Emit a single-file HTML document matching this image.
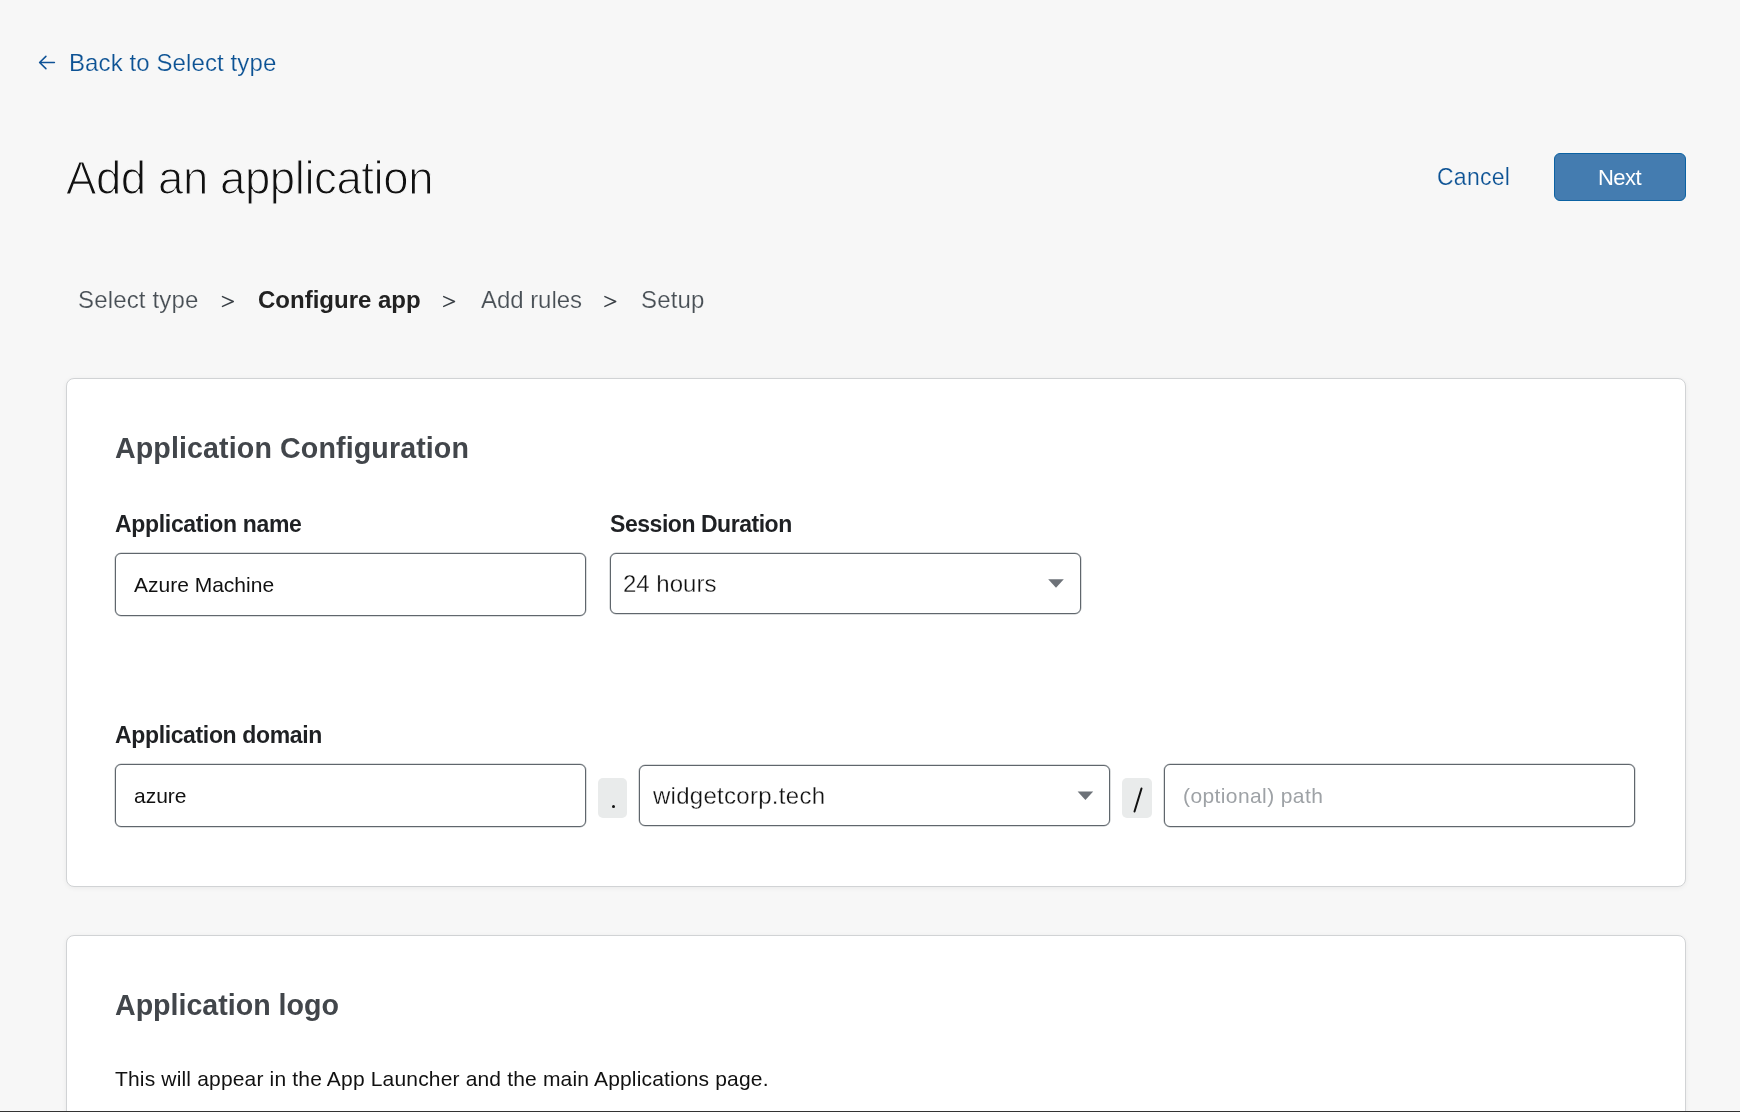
<!DOCTYPE html>
<html>
<head>
<meta charset="utf-8">
<style>
html,body{margin:0;padding:0;}
body{width:1740px;height:1112px;overflow:hidden;background:#f7f7f7;position:relative;font-family:"Liberation Sans",sans-serif;}
.t{position:absolute;white-space:nowrap;line-height:1;will-change:transform;}
.card{position:absolute;background:#fff;border:1px solid #d1d3d5;border-radius:8px;box-sizing:border-box;box-shadow:0 1px 5px rgba(0,0,0,0.06);}
.inp{position:absolute;box-sizing:border-box;background:#fff;border:1px solid #5f666c;border-radius:6px;box-shadow:0 0 0 0.5px rgba(95,102,108,0.45);}
.chip{position:absolute;box-sizing:border-box;background:#e9ebeb;border-radius:5px;}
.arrow{position:absolute;width:0;height:0;border-left:7.5px solid transparent;border-right:7.5px solid transparent;border-top:8px solid #6d7278;}
.link{color:#0c5294;-webkit-text-stroke:0.2px #f7f7f7;}
.crumb{color:#484f55;font-size:24px;letter-spacing:0.15px;-webkit-text-stroke:0.2px #f7f7f7;}
.gt{color:#4f565c;font-size:24px;}
.label{color:#1f2124;font-size:23px;font-weight:700;letter-spacing:-0.42px;}
.head{color:#42464b;font-size:28.6px;font-weight:700;}
</style>
</head>
<body>

<!-- back link -->
<svg style="position:absolute;left:0;top:0" width="80" height="80" viewBox="0 0 80 80">
  <path d="M40.2 62.5 H54.4 M45.9 56.4 L39.6 62.5 L45.9 68.6" fill="none" stroke="#0e5296" stroke-width="1.55" stroke-linecap="round" stroke-linejoin="round"/>
</svg>
<div class="t link" style="left:69px;top:51px;font-size:24px;letter-spacing:0.1px;">Back to Select type</div>

<!-- title -->
<div class="t" style="left:66.4px;top:155.6px;font-size:45.6px;color:#111;letter-spacing:-0.45px;-webkit-text-stroke:1.2px #f7f7f7;">Add an application</div>

<!-- actions -->
<div class="t link" style="left:1437px;top:166px;font-size:23px;letter-spacing:0.25px;">Cancel</div>
<div style="position:absolute;left:1554px;top:153px;width:132px;height:48px;box-sizing:border-box;background:#447cb0;border:1px solid #0b62a3;border-radius:6px;"></div>
<div class="t" style="left:1598px;top:167px;font-size:22px;color:#fff;letter-spacing:-0.55px;">Next</div>

<!-- breadcrumb -->
<div class="t crumb" style="left:78px;top:288px;">Select type</div>
<svg style="position:absolute;left:215px;top:288px" width="26" height="26" viewBox="215 288 26 26"><path d="M222.5 296.6 L233.3 301.5 L222.5 306.4" fill="none" stroke="#3a4046" stroke-width="1.5" stroke-linecap="round" stroke-linejoin="round"/></svg>
<div class="t" style="left:258px;top:288px;font-size:24px;font-weight:700;color:#222;">Configure app</div>
<svg style="position:absolute;left:436px;top:288px" width="26" height="26" viewBox="436 288 26 26"><path d="M443.70000000000005 296.6 L454.5 301.5 L443.70000000000005 306.4" fill="none" stroke="#3a4046" stroke-width="1.5" stroke-linecap="round" stroke-linejoin="round"/></svg>
<div class="t crumb" style="left:481px;top:288px;letter-spacing:-0.05px;">Add rules</div>
<svg style="position:absolute;left:597px;top:288px" width="26" height="26" viewBox="597 288 26 26"><path d="M604.9 296.6 L615.6999999999999 301.5 L604.9 306.4" fill="none" stroke="#3a4046" stroke-width="1.5" stroke-linecap="round" stroke-linejoin="round"/></svg>
<div class="t crumb" style="left:641px;top:288px;">Setup</div>

<!-- card 1 -->
<div class="card" style="left:66px;top:378px;width:1620px;height:509px;"></div>
<div class="t head" style="left:115px;top:434px;letter-spacing:0.12px;">Application Configuration</div>

<div class="t label" style="left:115px;top:513px;letter-spacing:-0.32px;">Application name</div>
<div class="inp" style="left:115px;top:553px;width:471px;height:63px;"></div>
<div class="t" style="left:134px;top:574px;font-size:21px;color:#111;">Azure Machine</div>

<div class="t label" style="left:610px;top:513px;letter-spacing:-0.46px;">Session Duration</div>
<div class="inp" style="left:610px;top:553px;width:471px;height:61px;"></div>
<div class="t" style="left:623px;top:572px;font-size:24px;color:#111;-webkit-text-stroke:0.3px #fff;">24 hours</div>
<svg style="position:absolute;left:1040px;top:570px" width="30" height="25" viewBox="1040 570 30 25"><path d="M1048.2 579.2 H1063.8 L1056 587.8 Z" fill="#6d7278"/></svg>

<div class="t label" style="left:115px;top:724px;letter-spacing:-0.36px;">Application domain</div>
<div class="inp" style="left:115px;top:764px;width:471px;height:63px;"></div>
<div class="t" style="left:134px;top:785px;font-size:21px;color:#111;">azure</div>

<div class="chip" style="left:598px;top:778px;width:29px;height:40px;"></div>
<div style="position:absolute;left:612px;top:804.5px;width:3px;height:3px;border-radius:50%;background:#111;"></div>

<div class="inp" style="left:639px;top:765px;width:471px;height:61px;"></div>
<div class="t" style="left:653px;top:784px;font-size:24px;color:#111;letter-spacing:0.28px;-webkit-text-stroke:0.3px #fff;">widgetcorp.tech</div>
<svg style="position:absolute;left:1070px;top:783px" width="30" height="25" viewBox="1070 783 30 25"><path d="M1077.6 791.4 H1093.2 L1085.4 800 Z" fill="#6d7278"/></svg>

<div class="chip" style="left:1122px;top:778px;width:30px;height:40px;"></div>
<svg style="position:absolute;left:1130px;top:785px" width="16" height="30" viewBox="0 0 16 30">
  <path d="M11.5 3.5 L4.5 26.5" stroke="#111" stroke-width="2" stroke-linecap="round"/>
</svg>

<div class="inp" style="left:1164px;top:764px;width:471px;height:63px;"></div>
<div class="t" style="left:1183px;top:785px;font-size:21px;color:#9ea2a6;letter-spacing:0.4px;">(optional) path</div>

<!-- card 2 -->
<div class="card" style="left:66px;top:935px;width:1620px;height:400px;"></div>
<div class="t head" style="left:115px;top:991px;letter-spacing:0px;">Application logo</div>
<div class="t" style="left:115px;top:1068px;font-size:21px;color:#111;letter-spacing:0.17px;">This will appear in the App Launcher and the main Applications page.</div>

<div style="position:absolute;left:0;top:1111px;width:1740px;height:1px;background:#333;"></div>
</body>
</html>
